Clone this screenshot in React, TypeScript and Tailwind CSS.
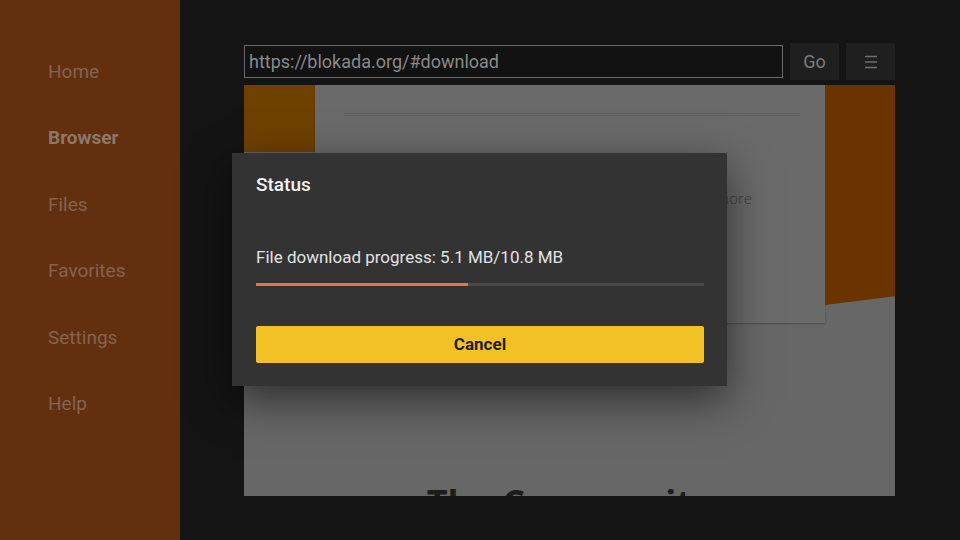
import React from "react";

const navItems = ["Home", "Browser", "Files", "Favorites", "Settings", "Help"];

export default function App() {
  return (
    <div
      className="relative flex h-[540px] w-[960px] overflow-hidden bg-[#141414]"
      style={{ fontFamily: "Roboto, 'Noto Sans', sans-serif" }}
    >
      {/* Sidebar */}
      <div className="flex h-full w-[180px] shrink-0 flex-col bg-[#62300f] pl-[48px] pt-[39px]">
        {navItems.map((item) => (
          <div
            key={item}
            className={
              "flex h-[66.4px] items-center text-[19px] " +
              (item === "Browser" ? "font-bold text-[#8e766a]" : "text-[#85634f]")
            }
          >
            {item}
          </div>
        ))}
      </div>

      {/* Main */}
      <div className="flex flex-1 flex-col pl-[64px] pr-[65px] pt-[43px]">
        <div className="flex h-[37px] items-center gap-[7px]">
          <div className="flex h-[33px] w-[539px] items-center border border-[#6a6a6a] bg-[#121212] pl-[4px] text-[18px] text-[#8a8a8a]">
            https://blokada.org/#download
          </div>
          <div className="flex h-[37px] w-[49px] items-center justify-center bg-[#1f1f1f] text-[18px] text-[#7c7c7c]">
            Go
          </div>
          <div className="flex h-[37px] w-[49px] items-center justify-center bg-[#1f1f1f]">
            <svg width="16" height="16" viewBox="0 0 16 16">
              <path d="M2 2.5h12M2 8h12M2 13.5h12" stroke="#6f6f6f" strokeWidth="1.6" />
            </svg>
          </div>
        </div>

        {/* Web content */}
        <div className="mt-[5px] flex h-[411px] w-[651px] flex-col overflow-hidden bg-[#676767]">
          <div className="flex h-[238px] shrink-0">
            <div className="w-[71px] shrink-0">
              <div className="h-[67px] w-[71px] bg-[#6e4100]" />
            </div>
            <div className="flex w-[510px] flex-col bg-[#6a6a6a] shadow-[0_1px_2px_rgba(0,0,0,0.25)]">
              <div className="ml-[29px] mt-[28px] h-[3px] w-[456px] border-y border-[#5d5d5d]" />
              <div
                className="mt-[71px] flex justify-end pr-[73px] text-[15px] font-light text-[#3c3c3c]"
                style={{ fontFamily: "'Open Sans', sans-serif" }}
              >
                Find out more
              </div>
            </div>
            <div className="flex-1">
              <div
                className="h-[220px] w-full bg-[#6b3300]"
                style={{ clipPath: "polygon(0 0, 100% 0, 100% 96%, 0 100%)" }}
              />
            </div>
          </div>
          <div
            className="mt-[155px] shrink-0 text-center text-[36px] font-bold leading-[50px] text-[#1c1c1c]"
            style={{ fontFamily: "'Open Sans', sans-serif" }}
          >
            The Community
          </div>
        </div>
      </div>

      {/* Dialog */}
      <div className="absolute left-[232px] top-[153px] flex h-[233px] w-[495px] flex-col bg-[#333333] px-[24px] shadow-[0_14px_40px_rgba(0,0,0,0.55)]">
        <div className="mt-[20px] text-[19px] font-medium leading-[24px] text-[#f2f2f2]">Status</div>
        <div className="mt-[48px] text-[17px] leading-[24px] text-[#e2e2e2]">
          File download progress: 5.1 MB/10.8 MB
        </div>
        <div className="mt-[14px] flex h-[3px] w-[448px] bg-[#4a4a4a]">
          <div className="h-full bg-[#e2793a]" style={{ width: `${(5.1 / 10.8) * 100}%` }} />
        </div>
        <div className="mt-[40px] flex h-[37px] w-[448px] items-center justify-center rounded-[2px] bg-[#f1c126] text-[17px] font-bold text-[#1e1e1e]">
          Cancel
        </div>
      </div>
    </div>
  );
}
